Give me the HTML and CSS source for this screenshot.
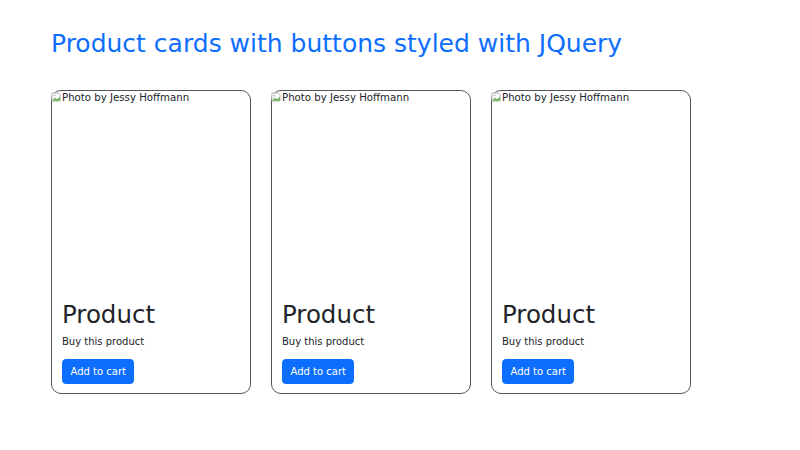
FILE: index.html
```html
<!DOCTYPE html>
<html lang="en">
<head>
  <meta charset="UTF-8" />
  <meta name="viewport" content="width=device-width, initial-scale=1.0"/>
  <title>Product cards</title>
  <link rel="stylesheet" href="styles.css">
</head>
<body>
  <div class="page">
    <h1 class="title">Product cards with buttons styled with JQuery</h1>

    <div class="card-row">
      <div class="card">
        <div class="card-img">
          <svg class="img-broken" width="10" height="10" viewBox="0 0 16 16">
            <path d="M1.5 1.5h10l3 3v10h-13z" fill="#fff" stroke="#a9a9a9" stroke-width="1.4"/>
            <path d="M2 14.5 L6 9 L9.5 12 L14 8 V14.5z" fill="#4f9f3c"/>
            <path d="M2 14.5 L6 11 L9 13.5 L14 11 V14.5z" fill="#8cc97a"/>
            <circle cx="5.5" cy="5.5" r="1.6" fill="#9bc7ea"/>
          </svg>
          <span>Photo by Jessy Hoffmann</span>
        </div>
        <div class="card-body">
          <h5 class="card-title">Product</h5>
          <p class="card-text">Buy this product</p>
          <button class="btn">Add to cart</button>
        </div>
      </div>

      <div class="card">
        <div class="card-img">
          <svg class="img-broken" width="10" height="10" viewBox="0 0 16 16">
            <path d="M1.5 1.5h10l3 3v10h-13z" fill="#fff" stroke="#a9a9a9" stroke-width="1.4"/>
            <path d="M2 14.5 L6 9 L9.5 12 L14 8 V14.5z" fill="#4f9f3c"/>
            <path d="M2 14.5 L6 11 L9 13.5 L14 11 V14.5z" fill="#8cc97a"/>
            <circle cx="5.5" cy="5.5" r="1.6" fill="#9bc7ea"/>
          </svg>
          <span>Photo by Jessy Hoffmann</span>
        </div>
        <div class="card-body">
          <h5 class="card-title">Product</h5>
          <p class="card-text">Buy this product</p>
          <button class="btn">Add to cart</button>
        </div>
      </div>

      <div class="card">
        <div class="card-img">
          <svg class="img-broken" width="10" height="10" viewBox="0 0 16 16">
            <path d="M1.5 1.5h10l3 3v10h-13z" fill="#fff" stroke="#a9a9a9" stroke-width="1.4"/>
            <path d="M2 14.5 L6 9 L9.5 12 L14 8 V14.5z" fill="#4f9f3c"/>
            <path d="M2 14.5 L6 11 L9 13.5 L14 11 V14.5z" fill="#8cc97a"/>
            <circle cx="5.5" cy="5.5" r="1.6" fill="#9bc7ea"/>
          </svg>
          <span>Photo by Jessy Hoffmann</span>
        </div>
        <div class="card-body">
          <h5 class="card-title">Product</h5>
          <p class="card-text">Buy this product</p>
          <button class="btn">Add to cart</button>
        </div>
      </div>
    </div>
  </div>
</body>
</html>
```

FILE: styles.css
```css
* {
  box-sizing: border-box;
}

body {
  margin: 0;
  padding: 0;
  font-family: 'DejaVu Sans', sans-serif;
  font-size: 10px;
  line-height: 1.5;
  color: #212529;
  background: #fff;
}

.page {
  padding: 29px 51px;
}

.title {
  margin: 0 0 31px;
  font-size: 25px;
  font-weight: 400;
  line-height: 1.2;
  color: #0d6efd;
}

.card-row {
  display: flex;
  gap: 20px;
}

.card {
  width: 200px;
  border: 1px solid #555;
  border-radius: 10px;
  background: #fff;
}

/* image area, the photo itself is missing so only the alt text shows */
.card-img {
  display: flex;
  align-items: flex-start;
  height: 199px;
  padding-top: 1px;
  font-size: 10.2px;
  line-height: normal;
}

.img-broken {
  flex: none;
  margin: 0 1px 0 -1px;
}

.card-body {
  padding: 10px 10px 9px;
}

.card-title {
  margin: 0 0 5px;
  font-size: 24.5px;
  font-weight: 400;
  line-height: 1.2;
}

.card-text {
  margin: 0 0 10px;
}

.btn {
  display: inline-block;
  padding: 3.75px 7.5px;
  font-family: inherit;
  font-size: 10px;
  line-height: 1.5;
  color: #fff;
  background-color: #0d6efd;
  border: 1px solid #0d6efd;
  border-radius: 3.75px;
  cursor: pointer;
}

.btn:hover {
  background-color: #0b5ed7;
}
```
